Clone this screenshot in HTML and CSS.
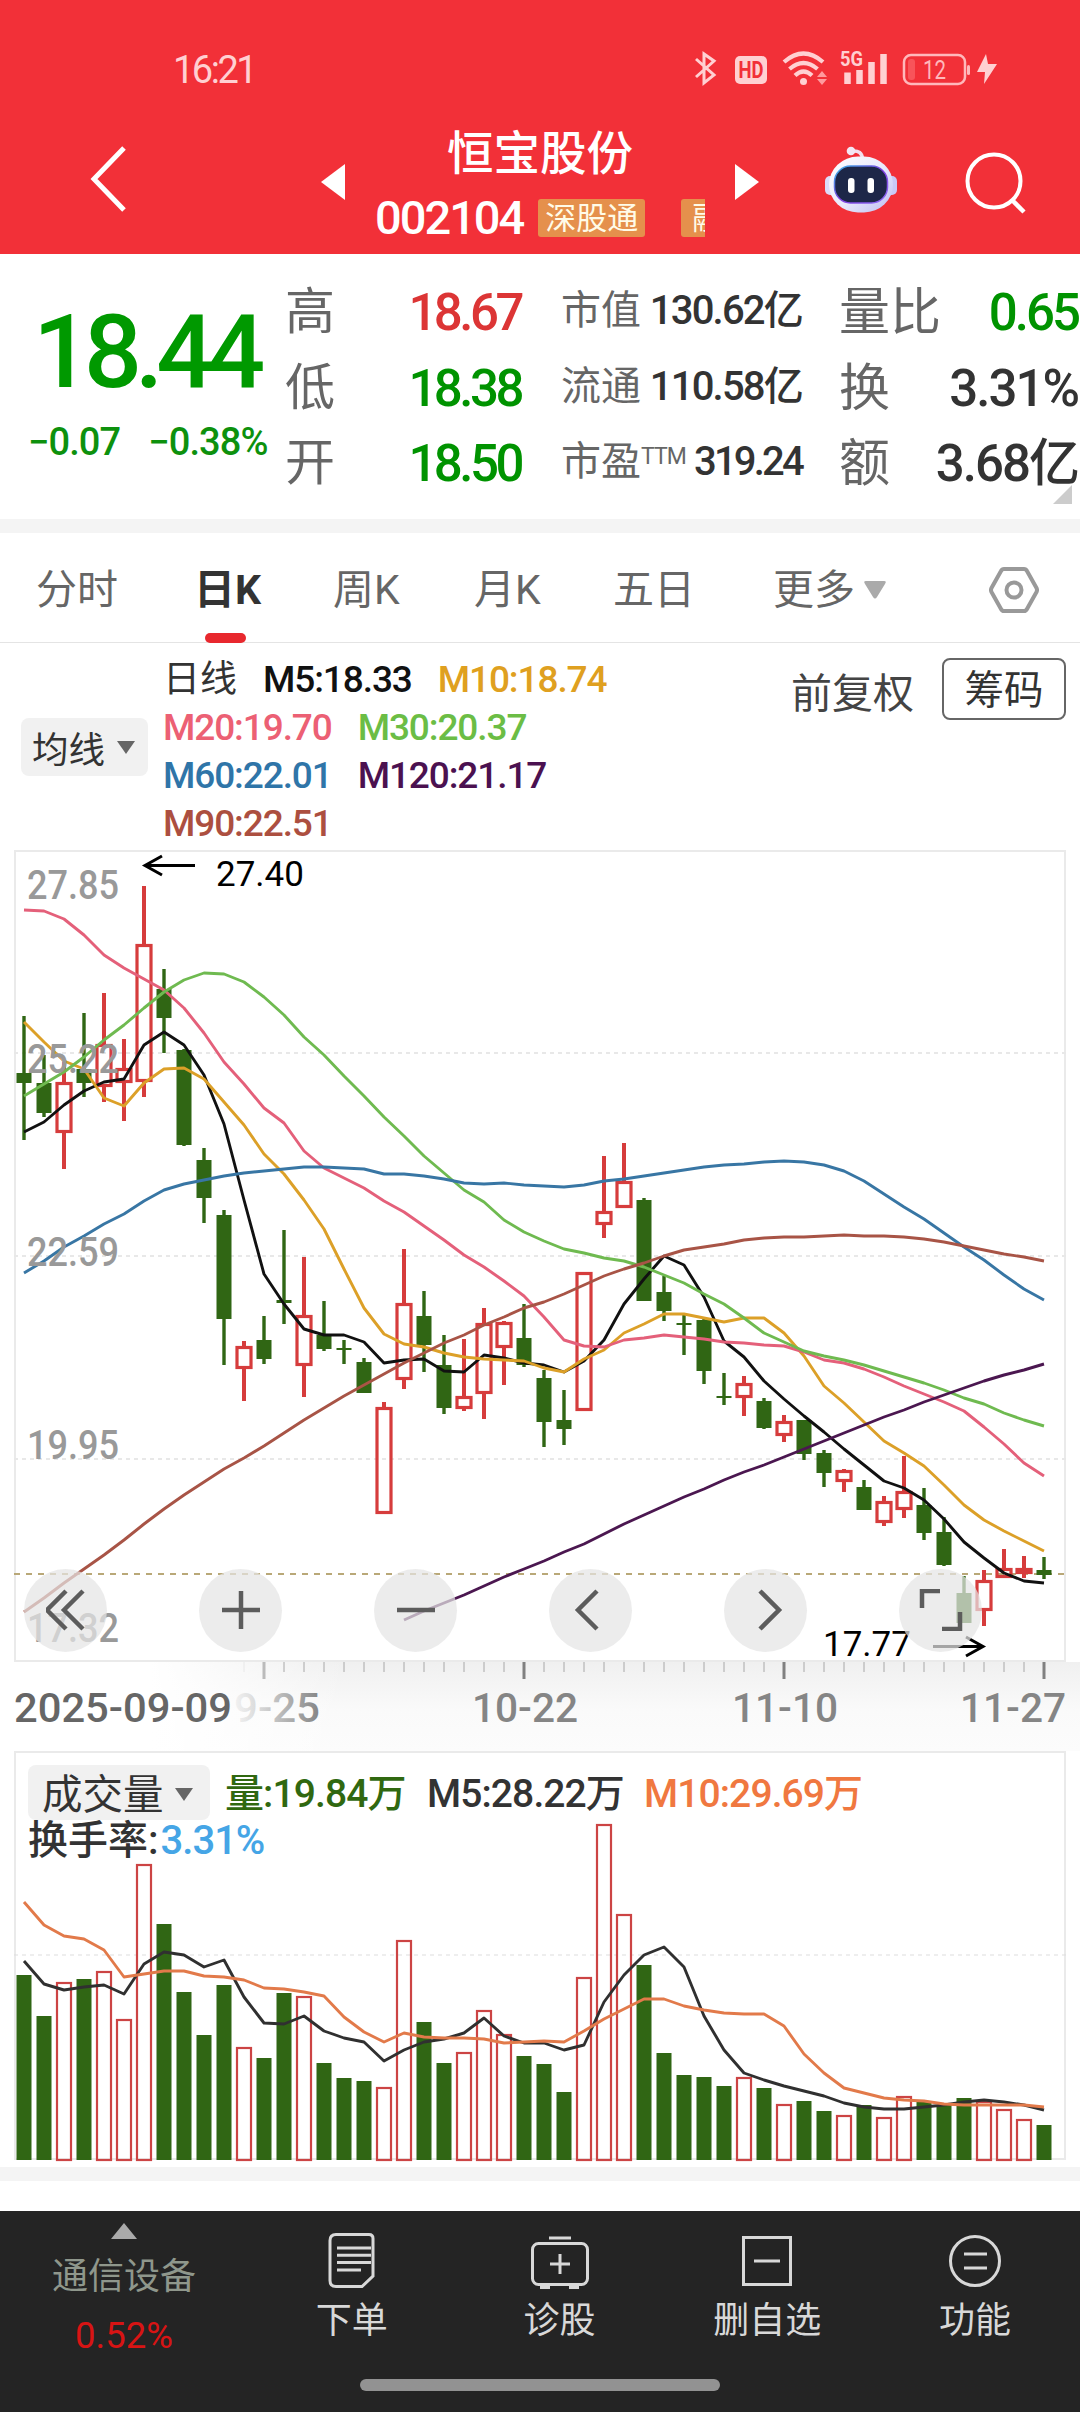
FILE: index.html
```html
<!DOCTYPE html>
<html lang="zh-CN">
<head>
<meta charset="utf-8"/>
<title>恒宝股份 002104</title>
<link rel="stylesheet" href="styles.css">
</head>
<body>
<header class="header">
  <div class="status-bar">
    <span class="clock">16:21</span>
    <svg class="status-icons" width="320" height="50" viewBox="690 40 320 50">
      <path d="M696 59l18 16-10 8V54l10 7-18 16" fill="none" stroke="#ffd0d2" stroke-width="3"/>
      <rect x="735" y="56" width="32" height="28" rx="5" fill="#ffd0d2"/>
      <text x="738.5" y="78" class="hd" textLength="25" lengthAdjust="spacingAndGlyphs">HD</text>
      <g fill="none" stroke="#ffd0d2" stroke-width="4.2">
        <path d="M784 62q19.500-17 39 0"/>
        <path d="M789.500 69q14-12 28 0"/>
        <path d="M795 75.500q8.500-8 17 0"/>
      </g>
      <circle cx="803.500" cy="81.500" r="3.500" fill="#ffd0d2"/>
      <path d="M817 77l5-6 5 6zM817 79l5 6 5-6z" fill="#ff9a9e"/>
      <text x="840" y="66" class="net" textLength="23" lengthAdjust="spacingAndGlyphs">5G</text>
      <path d="M847.500 84V72.500M859.500 84V70M871.500 84V62M883.500 84V54" stroke="#ffd0d2" stroke-width="6.500"/>
      <rect x="904" y="55" width="61" height="29" rx="7" fill="none" stroke="#ffb8bb" stroke-width="2.500"/>
      <rect x="908" y="59" width="7" height="21" rx="3" fill="#f8545a"/>
      <rect x="967" y="65" width="3" height="10" rx="1.500" fill="#ffb8bb"/>
      <text x="923" y="78.500" class="battery" textLength="23" lengthAdjust="spacingAndGlyphs">12</text>
      <path d="M986 54L977 72h8l-1 12 13-20h-9z" fill="#ffd0d2"/>
    </svg>
  </div>
  <div class="title-bar">
    <svg class="back" width="40" height="70" viewBox="0 0 40 70"><path d="M37 4L7 35l30 31" fill="none" stroke="#fff" stroke-width="5"/></svg>
    <svg class="prev" width="24" height="36" viewBox="0 0 24 36"><path d="M24 0v36L0 18z" fill="#fff"/></svg>
    <div class="stock">
      <div class="stock-name">恒宝股份</div>
      <div class="stock-code"><span class="num">002104</span><span class="tag">深股通</span><span class="tag tag-cut">融</span></div>
    </div>
    <svg class="next" width="24" height="36" viewBox="0 0 24 36"><path d="M0 0v36l24-18z" fill="#fff"/></svg>
    <svg class="robot" width="72" height="68" viewBox="0 0 72 68">
      <defs>
        <linearGradient id="head" x1="0" y1="0" x2="1" y2="1"><stop offset="0" stop-color="#fff"/><stop offset=".55" stop-color="#e8e8fb"/><stop offset="1" stop-color="#bcbcf2"/></linearGradient>
        <linearGradient id="edge" x1="0" y1="0" x2="1" y2="1"><stop offset="0" stop-color="#35b9e8"/><stop offset=".5" stop-color="#7f3fe0"/><stop offset="1" stop-color="#8c6cf5"/></linearGradient>
      </defs>
      <path d="M27 5q10-1 10.500 8" fill="none" stroke="#f3dfee" stroke-width="3.500"/>
      <circle cx="26" cy="5" r="4.300" fill="#f3e6f3"/>
      <rect x="0" y="30" width="12" height="19" rx="5" fill="#dcdcfa"/>
      <rect x="60" y="30" width="12" height="19" rx="5" fill="#c9c9f6"/>
      <rect x="4" y="10.500" width="64" height="56" rx="29" fill="url(#head)"/>
      <rect x="9.500" y="20" width="53" height="37" rx="16" fill="#1d2748" stroke="url(#edge)" stroke-width="1.500"/>
      <rect x="23" y="32" width="6.500" height="15" rx="3" fill="#fff"/>
      <rect x="42.500" y="32" width="6.500" height="15" rx="3" fill="#fff"/>
    </svg>
    <svg class="search" width="64" height="66" viewBox="0 0 64 66"><circle cx="30" cy="32" r="26.500" fill="none" stroke="#fff" stroke-width="4"/><path d="M48 51l12 12" stroke="#fff" stroke-width="4.500"/></svg>
  </div>
</header>

<section class="quote">
  <div class="price">
    <div class="price-now">18.44</div>
    <div class="price-diff"><span>−0.07</span><span>−0.38%</span></div>
  </div>
  <div class="col col-a">
    <div class="row"><span>高</span><b class="up">18.67</b></div>
    <div class="row"><span>低</span><b class="down">18.38</b></div>
    <div class="row"><span>开</span><b class="down">18.50</b></div>
  </div>
  <div class="col col-b">
    <div class="row"><span>市值</span><b>130.62亿</b></div>
    <div class="row"><span>流通</span><b>110.58亿</b></div>
    <div class="row"><span>市盈<sup>TTM</sup></span><b class="pe">319.24</b></div>
  </div>
  <div class="col col-c">
    <div class="row"><span>量比</span><b class="down lb">0.65</b></div>
    <div class="row"><span>换</span><b>3.31%</b></div>
    <div class="row"><span>额</span><b>3.68亿</b></div>
  </div>
  <i class="corner"></i>
</section>

<nav class="tabs">
  <span>分时</span>
  <span class="active">日K</span>
  <span>周K</span>
  <span>月K</span>
  <span>五日</span>
  <span class="more">更多<svg width="22" height="18" viewBox="0 0 22 18"><path d="M2 0h18q3 0 1 3l-8 13q-2 3-4 0L1 3Q-1 0 2 0z" fill="#aaa"/></svg></span>
  <svg class="setting" width="50" height="46" viewBox="0 0 50 46"><path d="M15 2h20q2 0 3 2l9.500 17q1 2 0 4L38 42q-1 2-3 2H15q-2 0-3-2L2.500 25q-1-2 0-4L12 4q1-2 3-2z" fill="none" stroke="#999" stroke-width="4"/><circle cx="25" cy="23" r="7.500" fill="none" stroke="#999" stroke-width="4"/></svg>
</nav>

<section class="ma">
  <div class="select select-ma">均线<svg width="18" height="13" viewBox="0 0 18 13"><path d="M0 0h18L9 13z" fill="#666"/></svg></div>
  <div class="ma-list">
    <div><span class="c-title">日线</span><span class="c5">M5:18.33</span><span class="c10">M10:18.74</span></div>
    <div><span class="c20">M20:19.70</span><span class="c30">M30:20.37</span></div>
    <div><span class="c60">M60:22.01</span><span class="c120">M120:21.17</span></div>
    <div><span class="c90">M90:22.51</span></div>
  </div>
  <div class="fq">前复权</div>
  <div class="chip">筹码</div>
</section>

<section class="kline">
  <svg id="kline" width="1080" height="812" viewBox="0 850 1080 812"></svg>
  <div class="tools">
    <span class="tool"><svg width="40" height="42" viewBox="0 0 40 42"><path d="M20 2L1 21l19 19M37 2L18 21l19 19"/></svg></span>
    <span class="tool"><svg width="40" height="42" viewBox="0 0 40 42"><path d="M20 2v38M1 21h38"/></svg></span>
    <span class="tool"><svg width="40" height="42" viewBox="0 0 40 42"><path d="M1 21h38"/></svg></span>
    <span class="tool"><svg width="40" height="42" viewBox="0 0 40 42"><path d="M26 2L7 21l19 19"/></svg></span>
    <span class="tool"><svg width="40" height="42" viewBox="0 0 40 42"><path d="M14 2l19 19-19 19"/></svg></span>
    <span class="tool"><svg width="44" height="42" viewBox="0 0 44 42"><path d="M3 19V2h18M23 40h18V23"/></svg></span>
  </div>
</section>

<section class="axis">
  <svg id="axis" width="1080" height="89" viewBox="0 1662 1080 89"></svg>
</section>

<section class="volume">
  <svg id="volume" width="1080" height="416" viewBox="0 1751 1080 416"></svg>
  <div class="vol-legend">
    <div class="vol-row">
      <div class="select select-vol">成交量<svg width="18" height="13" viewBox="0 0 18 13"><path d="M0 0h18L9 13z" fill="#666"/></svg></div>
      <span class="v-now">量:19.84万</span><span class="v-m5">M5:28.22万</span><span class="v-m10">M10:29.69万</span>
    </div>
    <div class="turnover">换手率:<span>3.31%</span></div>
  </div>
</section>

<div class="spacer"></div>

<footer class="bottom">
  <div class="menu">
    <div class="sector">
      <svg width="26" height="16" viewBox="0 0 26 16"><path d="M0 16L13 0l13 16z" fill="#aaa"/></svg>
      <span class="sector-name">通信设备</span>
      <span class="sector-rate">0.52%</span>
    </div>
    <div class="item"><svg width="58" height="58" viewBox="0 0 58 58"><path d="M13 2.500h33q4 0 4 4V44L39 54.500H13q-6 0-6-6v-40q0-6 6-6z"/><path d="M14 16h34M14 23.300h34M14 30.600h34M14 38h24"/></svg>下单</div>
    <div class="item"><svg width="58" height="58" viewBox="0 0 58 58"><rect x="1.500" y="11.500" width="55" height="41" rx="6"/><path d="M18 6h22M29 22v20M19 32h20M9 55.500h10M38 55.500h10"/></svg>诊股</div>
    <div class="item"><svg width="58" height="58" viewBox="0 0 58 58"><rect x="5.500" y="5.500" width="47" height="47"/><path d="M16 29h26"/></svg>删自选</div>
    <div class="item"><svg width="58" height="58" viewBox="0 0 58 58"><circle cx="29" cy="29" r="24.500"/><path d="M18 22h23M18 36h23"/></svg>功能</div>
  </div>
  <div class="home"></div>
</footer>
<script src="chart.js"></script>
</body>
</html>
```
FILE: styles.css
```css
* { box-sizing: border-box; }
html, body { margin: 0; padding: 0; }
body {
  width: 1080px; height: 2412px; overflow: hidden; background: #fff; color: #333;
  font-family: Roboto, "Noto Sans CJK SC", sans-serif;
}
svg { display: block; flex: none; }
b { font-weight: 500; }

/* header */
.header { height: 254px; background: #f23038; color: #fff; }
.status-bar { height: 115px; padding: 40px 70px 0 173px; display: flex; justify-content: space-between; }
.clock { font-size: 38px; line-height: 60px; letter-spacing: -2.5px; color: #ffd0d2; }
.hd { font-size: 23px; font-weight: 700; fill: #f23038; }
.net { font-size: 21px; font-weight: 700; fill: #ffd0d2; }
.battery { font-size: 25px; fill: #ffb8bb; }
.title-bar { height: 139px; display: flex; align-items: flex-start; }
.back { margin: 29px 0 0 87px; }
.prev { margin: 49px 0 0 194px; }
.stock { width: 330px; margin-left: 30px; margin-right: 30px; text-align: center; }
.stock-name { font-size: 46.5px; font-weight: 500; line-height: 56px; margin-top: 11px; }
.stock-code { display: flex; align-items: center; height: 40px; margin: 16px 0 0 0; width: 330px; overflow: hidden; font-size: 47px; font-weight: 500; line-height: 40px; letter-spacing: -2px; }
.tag { flex: none; width: 107px; height: 38px; margin-left: 15px; border-radius: 3px; background: #e5904c; color: #fffbe8; font-size: 31px; font-weight: 400; line-height: 39px; letter-spacing: 0; text-align: center; }
.tag-cut { width: 60px; margin-left: 36px; padding-left: 11px; text-align: left; }
.next { margin-top: 49px; }
.robot { margin: 31px 0 0 66px; }
.search { margin: 34px 0 0 67px; }

/* quote */
.quote { position: relative; height: 265px; padding-top: 21px; display: flex; }
.price { width: 285px; color: #009900; }
.price-now { font-size: 102px; font-weight: 500; line-height: 110px; letter-spacing: -7px; margin: 22px 0 0 33px; }
.price-diff { display: flex; gap: 28px; margin: 9px 0 0 28px; font-size: 38px; font-weight: 500; line-height: 52px; letter-spacing: -.9px; color: #0d910d; }
.row { display: flex; justify-content: space-between; height: 75.5px; line-height: 75.5px; white-space: nowrap; }
.row span { color: #666; }
.row b { color: #333; }
.row b.up { color: #dc3535; }
.row b.down { color: #009300; }
.col-a { width: 236px; font-size: 50px; }
.col-b { width: 241px; margin-left: 40px; font-size: 40px; }
.col-c { width: 239px; margin-left: 37px; font-size: 51px; }
.col-a b { letter-spacing: -3.5px; font-size: 51px; }
.col-c b { letter-spacing: -2px; font-size: 51px; }
.col-c b.lb { letter-spacing: -3px; }
.col-b .row { position: relative; top: -2px; }
.col-b b { letter-spacing: -1.8px; }
.col-b b.pe { letter-spacing: -2.8px; }
.row sup { font-size: 23px; line-height: 0; vertical-align: 11px; letter-spacing: -1px; }
.corner { position: absolute; right: 8px; bottom: 15px; border-left: 19px solid transparent; border-bottom: 19px solid #ccc; }

/* period tabs */
.tabs {
  height: 124px; border-top: 14px solid #f4f4f4; border-bottom: 1px solid #e4e4e4;
  padding: 0 41px 0 36px; display: grid; grid-template-columns: 160px 137px 141px 139px 160px 1fr 50px;
  font-size: 41px; line-height: 114px; color: #666;
}
.tabs .active { position: relative; left: -2px; font-weight: 700; color: #333; }
.tabs .active::after { content: ""; position: absolute; left: 11px; top: 100px; width: 41px; height: 10px; border-radius: 5px; background: #e8282e; }
.more { display: flex; align-items: center; gap: 9px; }
.setting { align-self: center; }

/* moving averages */
.ma { height: 207px; padding: 0 14px 0 21px; display: flex; align-items: flex-start; }
.select { display: flex; align-items: center; background: #f1f1f1; border-radius: 8px; color: #333; }
.select-ma { width: 127px; height: 58px; margin-top: 75px; padding-left: 11px; gap: 12px; font-size: 36.5px; }
.ma-list { width: 628px; margin: 13px 0 0 15px; font-size: 37px; font-weight: 500; line-height: 48px; letter-spacing: -1.1px; }
.ma-list div { display: flex; height: 48px; }
.ma-list span { margin-right: 26px; min-width: 167px; }
.ma-list .c-title { min-width: 0; letter-spacing: 0; color: #333; font-weight: 400; }
.ma-list .c5 { min-width: 147px; }
.c5 { color: #111; }
.c10 { color: #dfa020; }
.c20 { color: #ec6074; }
.c30 { color: #6bbd45; }
.c60 { color: #2f75a8; }
.c120 { color: #4b1150; }
.c90 { color: #ac4f40; }
.fq { width: 151px; margin-top: 20px; font-size: 41px; line-height: 62px; color: #444; }
.chip { width: 124px; height: 62px; margin-top: 15px; border: 2px solid #666; border-radius: 8px; font-size: 39.5px; line-height: 62px; text-align: center; }

/* charts */
.kline { position: relative; height: 812px; }
.tools { position: absolute; left: 24px; top: 718.5px; display: flex; gap: 92px; }
.tool { width: 83px; height: 83px; border-radius: 50%; background: rgba(229, 229, 229, .72); display: flex; align-items: center; justify-content: center; }
.tool path { fill: none; stroke: #5c5c5c; stroke-width: 4.5; }
.price-label { font-size: 41px; font-weight: 500; fill: #999; }
.peak { font-size: 35px; fill: #000; }
.axis { height: 89px; background: linear-gradient(90deg, #fff 14%, rgba(255, 255, 255, 0) 32%), linear-gradient(#f0f0f0, #fafafa 55%, #fcfcfc); }
.date { font-size: 41px; font-weight: 500; fill: #858585; }
.date.first { fill: #666; }
.date.fade { fill: url(#fade); }
.volume { position: relative; height: 416px; }
.vol-legend { position: absolute; left: 28px; top: 14px; }
.vol-row { display: flex; align-items: center; height: 55px; font-size: 39px; font-weight: 500; line-height: 52px; letter-spacing: -.9px; }
.vol-row > span { padding-top: 3px; }
.select-vol { width: 182px; height: 55px; padding: 4px 0 0 14px; gap: 11px; font-size: 40.5px; font-weight: 400; letter-spacing: 0; }
.v-now { width: 202px; margin-left: 15px; color: #306810; }
.v-m5 { width: 217px; }
.v-m10 { color: #f07840; }
.turnover { font-size: 40px; line-height: 44px; margin: -1px 0 0 0; font-weight: 500; }
.turnover span { margin-left: 2px; color: #45a5e6; letter-spacing: -1px; }
.spacer { height: 44px; border-top: 14px solid #f4f4f4; }

/* bottom menu */
.bottom { height: 201px; background: #242424; color: #d8d8d8; }
.menu { height: 168px; display: flex; padding-left: 20px; }
.sector { width: 208px; padding-top: 12px; display: flex; flex-direction: column; align-items: center; }
.sector-name { margin-top: 13px; font-size: 36px; line-height: 50px; color: #8f978c; }
.sector-rate { margin-top: 9px; font-size: 36.5px; line-height: 50px; color: #d81414; }
.item { position: relative; left: 20px; width: 207.7px; padding-top: 21px; display: flex; flex-direction: column; align-items: center; font-size: 36px; line-height: 62px; }
.item svg { fill: none; stroke: #d8d8d8; stroke-width: 3; }
.home { width: 360px; height: 12px; margin: 0 auto; border-radius: 6px; background: #929292; }
```
FILE: chart.js
```js
// one candle every 20px, first one at x = 24
const x = i => 24 + 20 * i;

// [color, high, body top, body bottom, low, volume top]
const candles = [
  ["g",1016,1073,1083,1140,1975],["g",1055,1083,1113,1117,2016],["r",1062,1082,1133,1169,1982],["g",1013,1069,1083,1097,1979],
  ["r",993,1044,1087,1102,1971],["r",1039,1068,1083,1121,2019],["r",886,944,1082,1097,1864],["g",969,989,1018,1053,1924],
  ["g",1049,1050,1145,1146,1992],["g",1148,1160,1198,1223,2035],["g",1210,1215,1319,1365,1985],["r",1341,1346,1369,1401,2047],
  ["g",1316,1340,1359,1364,2058],["g",1230,1300,1303,1324,1993],["r",1257,1315,1366,1397,1996],["g",1301,1335,1349,1351,2063],
  ["g",1340,1348,1350,1364,2078],["g",1358,1362,1393,1393,2081],["r",1402,1407,1514,1514,2087],["r",1249,1303,1380,1389,1940],
  ["g",1291,1316,1345,1372,2022],["g",1335,1365,1408,1414,2063],["r",1339,1396,1409,1411,2052],["r",1308,1323,1394,1419,2010],
  ["r",1321,1322,1348,1385,2034],["g",1304,1338,1365,1367,2056],["g",1370,1378,1422,1447,2064],["g",1390,1420,1429,1445,2092],
  ["r",1272,1272,1411,1411,1977],["r",1156,1211,1225,1238,1824],["r",1143,1181,1208,1208,1914],["g",1198,1200,1301,1301,1965],
  ["g",1276,1292,1311,1321,2053],["g",1315,1323,1325,1355,2075],["g",1317,1320,1371,1384,2077],["g",1373,1396,1398,1405,2086],
  ["r",1376,1383,1398,1416,2077],["g",1398,1401,1428,1429,2088],["r",1415,1421,1436,1442,2104],["g",1420,1420,1454,1460,2101],
  ["g",1450,1453,1473,1487,2111],["r",1469,1470,1482,1492,2115],["g",1480,1487,1510,1510,2105],["r",1496,1501,1523,1526,2117],
  ["r",1456,1491,1510,1518,2096],["g",1488,1505,1533,1540,2102],["g",1517,1532,1565,1566,2105],["g",1576,1593,1623,1623,2098],
  ["r",1570,1580,1611,1626,2101],["r",1549,1568,1578,1578,2109],["r",1556,1568,1574,1578,2119],["g",1557,1570,1575,1579,2125]
];

const priceLines = [
  ["#111", 0, [1132,1122,1105,1091,1082,1079,1045,1032,1045,1075,1124,1200,1274,1304,1329,1335,1335,1342,1363,1360,1359,1371,1372,1355,1358,1363,1365,1372,1361,1340,1304,1279,1256,1265,1297,1341,1357,1381,1399,1416,1432,1449,1465,1481,1488,1500,1519,1542,1558,1573,1581,1583]],
  ["#dca028", 0, [1022,1042,1061,1069,1098,1106,1083,1069,1068,1079,1102,1125,1154,1174,1200,1229,1269,1308,1334,1344,1347,1353,1357,1359,1360,1361,1368,1372,1359,1350,1333,1324,1314,1314,1318,1322,1318,1318,1333,1356,1386,1403,1422,1441,1453,1466,1485,1505,1520,1531,1541,1551]],
  ["#e4607a", 0, [910,911,919,935,955,968,979,990,1008,1033,1062,1084,1108,1123,1151,1168,1178,1188,1201,1212,1226,1240,1255,1267,1281,1296,1317,1340,1346,1347,1340,1338,1335,1337,1339,1342,1343,1345,1346,1352,1360,1363,1369,1377,1386,1394,1402,1411,1427,1444,1463,1476]],
  ["#6fba50", 0, [1096,1084,1072,1057,1040,1025,1008,992,980,973,974,982,997,1015,1037,1055,1076,1096,1117,1136,1156,1173,1190,1202,1220,1232,1241,1249,1253,1258,1261,1267,1275,1283,1294,1304,1318,1333,1342,1351,1356,1360,1365,1371,1377,1383,1390,1398,1404,1413,1420,1426]],
  ["#3876a4", 0, [1273,1261,1247,1236,1224,1214,1201,1190,1184,1180,1176,1173,1171,1169,1167,1167,1168,1169,1174,1174,1176,1179,1183,1184,1183,1185,1186,1187,1185,1181,1179,1176,1173,1170,1167,1165,1164,1162,1161,1162,1165,1171,1181,1194,1207,1219,1233,1247,1260,1275,1289,1300]],
  ["#a85446", 0, [1612,1598,1583,1569,1555,1540,1524,1509,1495,1482,1469,1458,1446,1433,1420,1408,1396,1385,1374,1363,1353,1343,1335,1325,1317,1308,1302,1294,1285,1276,1269,1263,1256,1250,1247,1244,1240,1238,1237,1237,1236,1235,1236,1236,1237,1239,1242,1246,1250,1254,1257,1261]],
  ["#4b1750", 19, [1620,1611,1603,1595,1586,1577,1569,1561,1552,1544,1534,1524,1515,1506,1497,1489,1480,1472,1465,1457,1449,1441,1433,1425,1417,1410,1402,1395,1388,1381,1375,1370,1364]]
];

const volumeLines = [
  ["#303030", 0, [1961,1984,1990,1987,1985,1994,1964,1952,1955,1967,1960,1997,2023,2024,2016,2031,2038,2042,2061,2050,2042,2039,2033,2018,2036,2043,2043,2050,2045,2002,1975,1955,1947,1967,2016,2050,2073,2080,2086,2091,2096,2103,2107,2109,2109,2107,2105,2102,2100,2102,2105,2110]],
  ["#e27a4a", 0, [1902,1925,1936,1939,1950,1977,1974,1971,1971,1976,1977,1980,1988,1989,1992,1996,2017,2032,2042,2033,2037,2038,2038,2039,2043,2042,2041,2042,2031,2019,2009,1999,1999,2006,2010,2013,2014,2014,2026,2054,2073,2088,2093,2098,2100,2101,2104,2105,2105,2105,2105,2107]]
];

function polyline([color, start, ys]) {
  const pts = ys.map((y, i) => x(start + i) + "," + y).join(" ");
  return `<polyline points="${pts}" fill="none" stroke="${color}" stroke-width="2.9" stroke-linejoin="round"/>`;
}

function hline(y, color, dash, width) {
  return `<path d="M14 ${y}H1066" stroke="${color}" stroke-width="${width}" stroke-dasharray="${dash}"/>`;
}

function label(cls, tx, y, w, text) {
  return `<text class="${cls}" x="${tx}" y="${y}" textLength="${w}" lengthAdjust="spacingAndGlyphs">${text}</text>`;
}

function drawKline() {
  let s = `<rect x="15" y="851" width="1050" height="810" fill="none" stroke="#eaeaea" stroke-width="2"/>`;
  [1053, 1256, 1459].forEach(y => s += hline(y, "#e8e8e8", "4 4", 2));
  s += hline(1574, "#b9a878", "6 6", 2);
  candles.forEach(([c, high, top, bottom, low], i) => {
    const cx = x(i);
    if (c === "g") {
      s += `<path d="M${cx} ${high}V${low}" stroke="#306614" stroke-width="3.4"/>`;
      s += `<rect x="${cx - 7.5}" y="${top}" width="15" height="${bottom - top}" fill="#306614"/>`;
    } else {
      s += `<path d="M${cx} ${high}V${top}M${cx} ${bottom}V${low}" stroke="#d63c3c" stroke-width="4"/>`;
      s += `<rect x="${cx - 7}" y="${top + 1.5}" width="14" height="${Math.max(bottom - top - 3, 2)}" fill="none" stroke="#d63c3c" stroke-width="3.2"/>`;
    }
  });
  priceLines.forEach(l => s += polyline(l));
  [["27.85", 899], ["25.22", 1073], ["22.59", 1266], ["19.95", 1459], ["17.32", 1642]]
    .forEach(([t, y]) => s += label("price-label", 27, y, 92, t));
  s += `<path d="M195 865.5H145M162 856L145 865.5L162 875" fill="none" stroke="#000" stroke-width="3"/>`;
  s += `<text class="peak" x="216" y="886">27.40</text>`;
  s += `<path d="M933 1646.5H983M966 1637L983 1646.500L966 1656" fill="none" stroke="#000" stroke-width="3"/>`;
  s += `<text class="peak" x="823" y="1656">17.77</text>`;
  document.getElementById("kline").innerHTML = s;
}

function drawAxis() {
  let s = `<defs><linearGradient id="fade"><stop offset="0" stop-color="#858585" stop-opacity=".08"/><stop offset=".3" stop-color="#858585" stop-opacity=".3"/><stop offset="1" stop-color="#858585"/></linearGradient></defs>`;
  for (let i = 11; i <= 51; i++) {
    const big = (i - 12) % 13 === 0;
    const color = i === 11 ? "#e8e8e8" : i === 12 ? "#bbb" : big ? "#808080" : "#a8a8a8";
    s += `<path d="M${x(i)} 1662V${big ? 1679 : 1672}" stroke="${color}" stroke-width="${big ? 3 : 1}"/>`;
  }
  s += label("date first", 14, 1722, 218, "2025-09-09");
  s += label("date fade", 234, 1722, 86, "9-25");
  s += label("date", 472, 1722, 106, "10-22");
  s += label("date", 732, 1722, 106, "11-10");
  s += label("date", 960, 1722, 106, "11-27");
  document.getElementById("axis").innerHTML = s;
}

function drawVolume() {
  let s = `<rect x="15" y="1752" width="1050" height="407" fill="none" stroke="#eaeaea" stroke-width="2"/>`;
  s += hline(1955, "#ddd", "4 4", 1);
  candles.forEach(([c, , , , , top], i) => {
    if (c === "g") s += `<rect x="${x(i) - 7.5}" y="${top}" width="15" height="${2160 - top}" fill="#306614"/>`;
    else s += `<rect x="${x(i) - 7}" y="${top + 1}" width="14" height="${2159 - top}" fill="none" stroke="#cc4444" stroke-width="2.2"/>`;
  });
  volumeLines.forEach(l => s += polyline(l));
  document.getElementById("volume").innerHTML = s;
}

drawKline();
drawAxis();
drawVolume();
```
